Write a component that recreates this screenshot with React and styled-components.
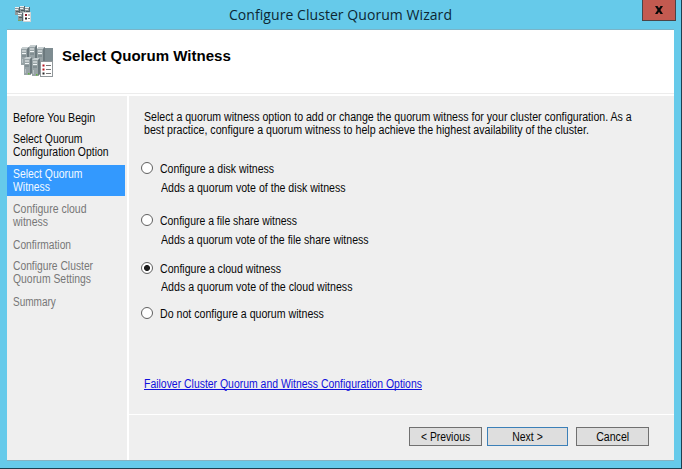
import React, { useState } from 'react';
import styled, { createGlobalStyle } from 'styled-components';

const GlobalStyle = createGlobalStyle`
  * { box-sizing: border-box; }
  body { margin: 0; overflow: hidden; }
  button { font: inherit; color: inherit; }
`;

const Window = styled.div`
  width: 682px;
  height: 469px;
  display: flex;
  flex-direction: column;
  background: #66caea;
  border-right: 1px solid #1d3f50;
  border-bottom: 1px solid #1d3f50;
  padding: 0 7px 7px 7px;
  font: 12px/13px 'Liberation Sans', Arial, sans-serif;
  color: #080808;
`;

const TitleBar = styled.header`
  height: 29px;
  flex: none;
  display: grid;
  grid-template-columns: 34px 1fr 34px;
  align-items: start;
  margin-right: -2px;
`;

const TitleIcon = styled.span`
  display: block;
  padding: 5px 0 0 8px;
  line-height: 0;
`;

const Title = styled.h1`
  margin: 0;
  padding: 4px 2px 0 0;
  text-align: center;
  font: 14px/21px 'Open Sans', 'Noto Sans', sans-serif;
  letter-spacing: 0.06px;
  color: #0c2733;
`;

const CloseButton = styled.button`
  width: 34px;
  height: 21px;
  padding: 0;
  display: flex;
  align-items: center;
  justify-content: center;
  background: #c35a50;
  border: 1px solid #4c4447;
  border-top: 0;
`;

const Client = styled.main`
  flex: 1;
  display: flex;
  flex-direction: column;
  min-height: 0;
  background: #fff;
  border-top: 1px solid #79b4c8;
  border-bottom: 1px solid #86b3c2;
`;

const PageHeader = styled.div`
  height: 64px;
  flex: none;
  display: flex;
  padding: 15px 0 0 14px;
  gap: 9px;
  border-bottom: 1px solid #ececec;
  margin-bottom: 2px;
`;

const Heading = styled.h2`
  margin: 3px 0 0;
  font: bold 14px/16px 'Liberation Sans', Arial, sans-serif;
  color: #000;
  white-space: nowrap;
  transform: scaleX(1.075);
  transform-origin: 0 0;
`;

const Body = styled.div`
  flex: 1;
  min-height: 0;
  display: grid;
  grid-template-columns: 120px minmax(0, 1fr);
  column-gap: 2px;
`;

const Steps = styled.nav`
  background: #efefef;
  padding: 16px 2px 0 0;
`;

const Step = styled.div`
  margin-top: ${({ $gap }) => $gap}px;
  padding: ${({ $current }) => ($current ? '3px 0 2px 6px' : '0 0 0 6px')};
  background: ${({ $current }) => ($current ? '#3399fe' : 'transparent')};
  color: ${({ $current, $pending }) => ($current ? '#f4faff' : $pending ? '#777' : '#080808')};
`;

const Line = styled.span`
  display: block;
  width: max-content;
  white-space: nowrap;
  transform: scaleX(${({ $ratio }) => $ratio});
  transform-origin: ${({ $center }) => ($center ? '50% 0' : '0 0')};
`;

const Main = styled.section`
  display: grid;
  grid-template-columns: minmax(0, 1fr);
  grid-template-rows: 319px 1fr;
  background: #efefef;
`;

const Content = styled.div`
  padding: 15px 0 0 12px;
  border-bottom: 1px solid #fff;
`;

const Intro = styled.div`
  padding-left: 3px;
  margin-bottom: 25px;
`;

const Option = styled.label`
  display: grid;
  grid-template-columns: 13px minmax(0, 1fr);
  column-gap: 5px;
  height: ${({ $height }) => $height}px;
  align-content: start;
`;

const OptionLabel = styled.div`
  padding: 1px 0 0 0.5px;
`;

const Radio = styled.input`
  appearance: none;
  width: 12px;
  height: 12px;
  margin: 0;
  border: 1px solid #606060;
  border-radius: 50%;
  background: ${({ checked }) =>
    checked ? 'radial-gradient(circle, #1c1c1c 0 2.6px, #fff 3.4px)' : '#fff'};
`;

const Description = styled.div`
  grid-column: 2;
  padding-left: 2px;
  margin-top: ${({ $gap }) => $gap}px;
`;

const HelpLink = styled.a`
  display: block;
  width: max-content;
  margin: 56px 0 0 3px;
  color: #1010dc;
  text-decoration: underline;
  text-underline-offset: 1px;
  text-decoration-skip-ink: none;
`;

const Footer = styled.footer`
  display: flex;
  padding: 12px 25px 0 0;
  justify-content: flex-end;
`;

const WizardButton = styled.button`
  width: ${({ $width }) => $width}px;
  height: 19px;
  margin-left: ${({ $gap }) => $gap}px;
  padding: 1px 0 0;
  display: flex;
  align-items: center;
  justify-content: center;
  background: #dedede;
  border: 1px solid ${({ $primary }) => ($primary ? '#3c80b8' : '#707070')};
`;

function Server({ x, y }) {
  return (
    <g transform={`translate(${x} ${y})`}>
      <path d="M0 2 L2 0 H8 V16 L6 18 H0Z" fill="#98a3a6" />
      <path d="M0 2 L2 0 H8 L6 2Z" fill="#c6ced0" />
      <path d="M6 2 L8 0 V16 L6 18Z" fill="#6c797e" />
      <path d="M1 4H5M1 6.5H5" stroke="#f1f5f6" />
      <path d="M1 9H5" stroke="#6f7c81" />
      <path d="M1.5 12V16" stroke="#b8c1c4" />
      <rect x="4" y="16" width="1.5" height="1.5" fill="#63b43c" />
    </g>
  );
}

function ClusterIcon({ size }) {
  return (
    <svg width={size} height={size} viewBox="0 0 32 32" aria-hidden="true">
      <rect x="22" y="3" width="10" height="16" fill="#7e8c91" />
      <Server x={0} y={2} />
      <Server x={8} y={0} />
      <Server x={16} y={2} />
      <Server x={3} y={12} />
      <Server x={11} y={13} />
      <rect x="19.5" y="16.5" width="12" height="15" fill="#fff" stroke="#90979a" />
      <path d="M21.5 20.5h2M21.5 24.5h2" stroke="#b71520" strokeWidth="2" />
      <path d="M21.5 28.5h2" stroke="#292929" strokeWidth="2" />
      <path d="M25 20.5h5M25 24.5h5M25 28.5h5" stroke="#777" />
    </svg>
  );
}

function MiniServer({ x, y }) {
  return (
    <g transform={`translate(${x} ${y})`}>
      <rect width="4" height="8" fill="#8f999c" />
      <path d="M4.5 0V8" stroke="#56676e" />
      <path d="M0 .5H4M0 2.5H3" stroke="#eef1f2" />
      <path d="M1 4.5H4" stroke="#4f5c61" />
    </g>
  );
}

function MiniClusterIcon() {
  return (
    <svg width="17" height="17" viewBox="0 0 17 17" aria-hidden="true">
      <MiniServer x={0} y={2} />
      <MiniServer x={5} y={1} />
      <MiniServer x={10} y={2} />
      <MiniServer x={3} y={8} />
      <path d="M3 15.5h3" stroke="#78a95c" />
      <rect x="8.5" y="7.5" width="7" height="9" fill="#fff" stroke="#d0d4d6" />
      <path d="M10 10h2" stroke="#8f1e2c" strokeWidth="2" />
      <path d="M10 13.5h2" stroke="#222" strokeWidth="2" />
      <path d="M13 10h2M13 13.5h2" stroke="#777" />
    </svg>
  );
}

function CloseGlyph() {
  return (
    <svg width="10" height="8" viewBox="0 0 10 8" aria-hidden="true">
      <path d="M1 0H3.5L5 2.2L6.5 0H9L6.4 4L9 8H6.5L5 5.8L3.5 8H1L3.6 4Z" fill="#080808" />
    </svg>
  );
}

const steps = [
  { gap: 0, lines: [['Before You Begin', 0.887]] },
  { gap: 8, lines: [['Select Quorum', 0.868], ['Configuration Option', 0.868]] },
  { gap: 6, current: true, lines: [['Select Quorum', 0.868], ['Witness', 0.867]] },
  { gap: 7, pending: true, lines: [['Configure cloud', 0.874], ['witness', 0.875]] },
  { gap: 10, pending: true, lines: [['Confirmation', 0.853]] },
  { gap: 8, pending: true, lines: [['Configure Cluster', 0.857], ['Quorum Settings', 0.866]] },
  { gap: 10, pending: true, lines: [['Summary', 0.835]] },
];

const options = [
  { id: 'disk', height: 52, gap: 6, label: ['Configure a disk witness', 0.877], text: ['Adds a quorum vote of the disk witness', 0.884] },
  { id: 'share', height: 48, gap: 6, label: ['Configure a file share witness', 0.87], text: ['Adds a quorum vote of the file share witness', 0.879] },
  { id: 'cloud', height: 45, gap: 5, label: ['Configure a cloud witness', 0.881], text: ['Adds a quorum vote of the cloud witness', 0.886] },
  { id: 'none', height: 15, gap: 0, label: ['Do not configure a quorum witness', 0.884] },
];

export default function App() {
  const [choice, setChoice] = useState('cloud');
  return (
    <>
      <GlobalStyle />
      <Window>
        <TitleBar>
          <TitleIcon><MiniClusterIcon /></TitleIcon>
          <Title>Configure Cluster Quorum Wizard</Title>
          <CloseButton aria-label="Close"><CloseGlyph /></CloseButton>
        </TitleBar>
        <Client>
          <PageHeader>
            <ClusterIcon size={32} />
            <Heading>Select Quorum Witness</Heading>
          </PageHeader>
          <Body>
            <Steps>
              {steps.map((step, i) => (
                <Step key={i} $gap={step.gap} $current={step.current} $pending={step.pending}>
                  {step.lines.map(([text, ratio]) => (
                    <Line key={text} $ratio={ratio}>{text}</Line>
                  ))}
                </Step>
              ))}
            </Steps>
            <Main>
              <Content>
                <Intro>
                  <Line $ratio={0.883}>Select a quorum witness option to add or change the quorum witness for your cluster configuration. As a</Line>
                  <Line $ratio={0.888}>best practice, configure a quorum witness to help achieve the highest availability of the cluster.</Line>
                </Intro>
                {options.map((option) => (
                  <Option key={option.id} $height={option.height}>
                    <Radio
                      type="radio"
                      name="witness"
                      checked={choice === option.id}
                      onChange={() => setChoice(option.id)}
                    />
                    <OptionLabel>
                      <Line $ratio={option.label[1]}>{option.label[0]}</Line>
                    </OptionLabel>
                    {option.text && (
                      <Description $gap={option.gap}>
                        <Line $ratio={option.text[1]}>{option.text[0]}</Line>
                      </Description>
                    )}
                  </Option>
                ))}
                <HelpLink href="#options">
                  <Line $ratio={0.87}>Failover Cluster Quorum and Witness Configuration Options</Line>
                </HelpLink>
              </Content>
              <Footer>
                <WizardButton $width={73} $gap={0}><Line $center $ratio={0.86}>&lt; Previous</Line></WizardButton>
                <WizardButton $width={81} $gap={5} $primary><Line $center $ratio={0.871}>Next &gt;</Line></WizardButton>
                <WizardButton $width={73} $gap={8}><Line $center $ratio={0.883}>Cancel</Line></WizardButton>
              </Footer>
            </Main>
          </Body>
        </Client>
      </Window>
    </>
  );
}
